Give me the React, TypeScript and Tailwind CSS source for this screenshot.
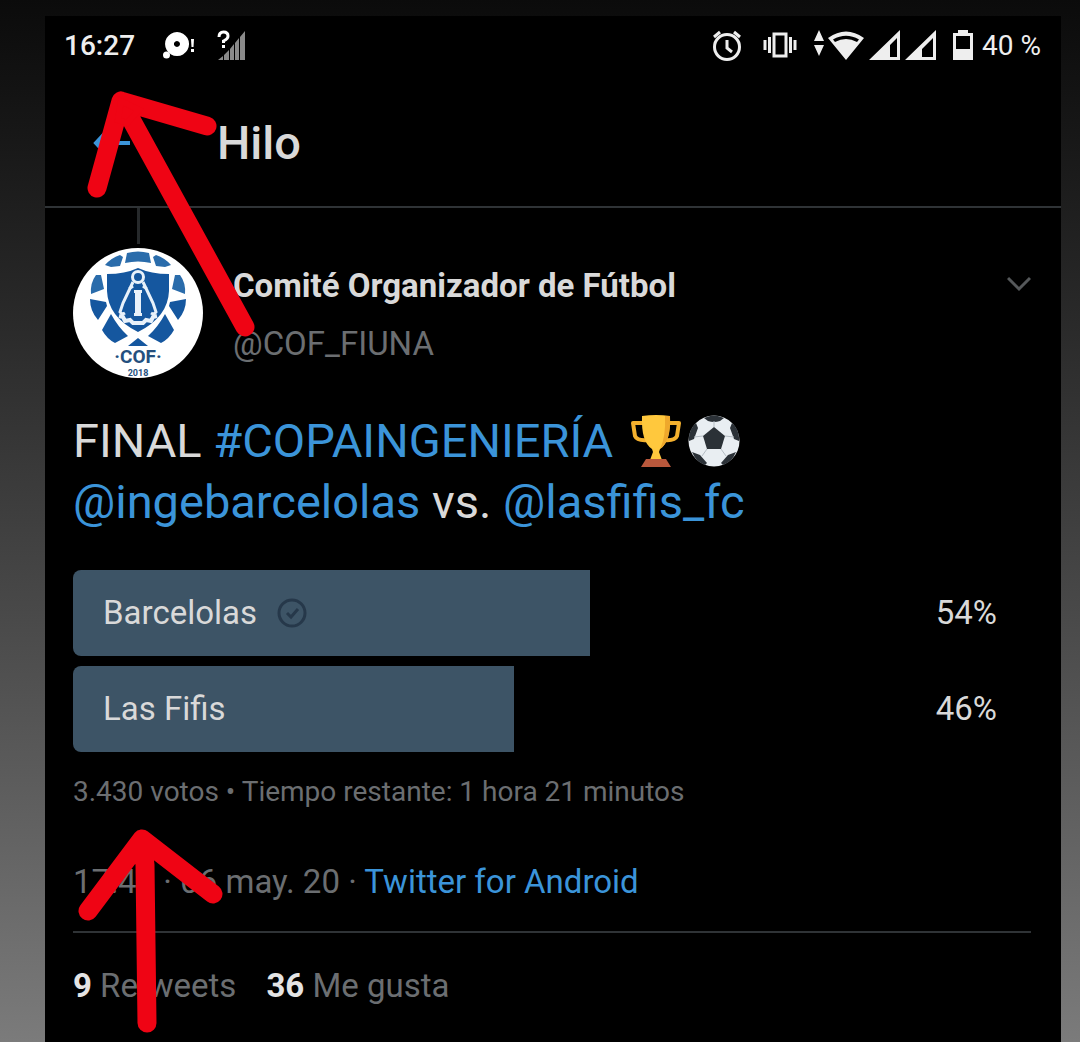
import type { ReactNode } from 'react'

const options = [
  { label: 'Barcelolas', percent: 54, voted: true },
  { label: 'Las Fifis', percent: 46, voted: false },
]

export default function App() {
  return (
    <div className="relative min-h-screen overflow-hidden bg-linear-to-b from-[#0b0b0b] via-[#3f3f3f] to-[#7b7b7b] pt-4 pr-[19px] pl-[45px] font-[Roboto,sans-serif] text-[#d9d9d9]">
      <main className="min-h-[calc(100vh-16px)] bg-black">
        <StatusBar />
        <header className="flex h-[116px] items-center border-b-2 border-[#2f3336] pb-3 pl-12">
          <button type="button" aria-label="Atrás" className="w-[124px]">
            <svg
              viewBox="0 0 38 30"
              className="h-[30px] w-[38px] fill-none stroke-[#3b94d9] stroke-4"
            >
              <path d="M15 2 3 15l12 13M3 15h34" />
            </svg>
          </button>
          <h1 className="text-[47px] leading-[56px] font-medium">Hilo</h1>
        </header>

        <article className="pr-[30px] pl-7">
          <div className="ml-16 h-9 w-[3px] bg-[#26292b]" />
          <div className="flex items-start pt-1">
            <Avatar />
            <div className="ml-[30px] grow pt-[18px]">
              <h2 className="text-[33px] leading-[40px] font-bold">
                Comité Organizador de Fútbol
              </h2>
              <p className="mt-[18px] text-[33px] leading-[40px] text-[#6b6e71]">
                @COF_FIUNA
              </p>
            </div>
            <button type="button" aria-label="Más opciones" className="pt-7">
              <svg
                viewBox="0 0 24 16"
                className="h-4 w-6 fill-none stroke-[#55585a] stroke-3"
              >
                <path d="m1 2 11 11L23 2" />
              </svg>
            </button>
          </div>

          <p className="mt-8 text-[47px] leading-[61px]">
            FINAL <TextLink>#COPAINGENIERÍA</TextLink> <Trophy />
            <Ball />
            <br />
            <TextLink>@ingebarcelolas</TextLink> vs.{' '}
            <TextLink>@lasfifis_fc</TextLink>
          </p>

          <ul className="mt-[38px] flex flex-col gap-[10px] text-[33px]">
            {options.map((option) => (
              <li key={option.label} className="flex h-[86px] items-center">
                <div
                  className="flex h-full items-center gap-5 rounded-l-lg bg-[#3d5466] pl-[30px]"
                  style={{ width: `${option.percent}%` }}
                >
                  {option.label}
                  {option.voted && <VotedMark />}
                </div>
                <span className="ml-auto pr-[34px]">{option.percent}%</span>
              </li>
            ))}
          </ul>

          <p className="mt-5 text-[28px] leading-[40px] text-[#6b6e71]">
            3.430 votos • Tiempo restante: 1 hora 21 minutos
          </p>
          <p className="mt-[50px] border-b-2 border-[#2f3336] pb-[29px] text-[33px] leading-[40px] text-[#6b6e71]">
            17:41 · 06 may. 20 · <TextLink>Twitter for Android</TextLink>
          </p>
          <p className="mt-[33px] flex gap-[30px] text-[33px] leading-[40px] text-[#6b6e71]">
            <span>
              <b className="text-[#e4e4e4]">9</b> Retweets
            </span>
            <span>
              <b className="text-[#e4e4e4]">36</b> Me gusta
            </span>
          </p>
        </article>
      </main>

      <svg
        viewBox="84 88 178 252"
        className="pointer-events-none absolute top-[88px] left-[84px] w-[178px] fill-none stroke-[#ef0414]"
      >
        <path
          d="M97 188 121 101 207 126M121 101 245 327"
          strokeWidth="19"
          strokeLinecap="round"
          strokeLinejoin="round"
        />
        <path d="M121 101l18 9-12 13-9-3z" strokeWidth="6" fill="#ef0414" />
      </svg>
      <svg
        viewBox="74 824 154 214"
        className="pointer-events-none absolute top-[824px] left-[74px] w-[154px] fill-none stroke-[#ef0414]"
      >
        <path
          d="M88 911 142 839 213 894M142 839l3 26 2 158"
          strokeWidth="19"
          strokeLinecap="round"
          strokeLinejoin="round"
        />
      </svg>
    </div>
  )
}

function TextLink({ children }: { children: ReactNode }) {
  return (
    <a href="#" className="text-[#3b94d9]">
      {children}
    </a>
  )
}

function StatusBar() {
  return (
    <div className="flex h-[76px] items-start justify-between pt-[10px] pr-5 pl-[19px] text-[28px] leading-[40px] font-medium text-[#eeeeee]">
      <div className="flex items-center">
        <span>16:27</span>
        <svg viewBox="0 0 34 30" className="ml-7 h-[30px] w-[34px] fill-white">
          <path
            fillRule="evenodd"
            d="M14 1a12 12 0 1 0 .1 0zM14 10a3 3 0 1 1-.1 0z"
          />
          <circle cx="3.500" cy="24" r="3.500" />
          <path d="M28 8h3l-.5 8h-2zM28 18h3v3h-3z" />
        </svg>
        <svg viewBox="0 0 30 32" className="ml-5 h-8 w-[30px]">
          <path
            d="M1 30 6 26v4zM7 30v-5l5-5v10zM13 30V19l4-5v16zM18 30V13l4-5v22zM23 30V7l5-6v29z"
            fill="#8a8a8a"
          />
          <path
            d="M2 7q0-5 4.500-5T11 6q0 3-4.500 5v2M6.500 15v3"
            fill="none"
            stroke="#fff"
            strokeWidth="3"
          />
        </svg>
      </div>
      <div className="flex items-center">
        <svg
          viewBox="0 0 30 32"
          className="h-8 w-[30px] fill-none stroke-[#eeeeee]"
        >
          <circle cx="15" cy="17" r="12.500" strokeWidth="3" />
          <path d="M15 10v8l5 4M2 7l6-5M28 7l-6-5" strokeWidth="3" />
        </svg>
        <svg
          viewBox="0 0 36 28"
          className="ml-5 h-7 w-9 fill-none stroke-[#eeeeee]"
        >
          <path d="M12 2h12v22H12z" strokeWidth="3" />
          <path d="M7.500 5v16M28.500 5v16" strokeWidth="3" />
          <path d="M3 8v10M33 8v10" strokeWidth="3" />
        </svg>
        <svg
          viewBox="0 0 52 32"
          className="ml-[15px] h-8 w-[52px] fill-[#eeeeee]"
        >
          <path d="M6 0l5 11H1zM6 26l5-11H1z" />
          <path
            fillRule="evenodd"
            d="M15 8Q33-5 51 8L33 30zM20 9.500l2 2.500q11-6 22 0l2-2.500Q33 2 20 9.500z"
          />
        </svg>
        <Signal />
        <Signal small />
        <svg viewBox="0 0 20 32" className="mr-[9px] ml-4 h-8 w-5 fill-[#eeeeee]">
          <path
            fillRule="evenodd"
            d="M0 3h5V0h10v3h5v27H0zM3 6v13h14V6z"
          />
        </svg>
        <span className="font-normal">40 %</span>
      </div>
    </div>
  )
}

function Signal({ small = false }: { small?: boolean }) {
  return (
    <svg viewBox="0 0 32 32" className="ml-1 h-8 w-8 fill-[#eeeeee]">
      <path
        fillRule="evenodd"
        d={small ? 'M31 0v30H0zM28 8v19H17v-8z' : 'M31 0v30H0zM28 8v19h-7V15z'}
      />
    </svg>
  )
}

function VotedMark() {
  return (
    <svg
      viewBox="0 0 30 30"
      className="size-[30px] fill-none stroke-[#26384a] stroke-3"
    >
      <circle cx="15" cy="15" r="13" />
      <path d="m10 15 4 4 7-8" />
    </svg>
  )
}

function Avatar() {
  return (
    <svg viewBox="0 0 130 130" className="size-[130px]">
      <circle cx="65" cy="65" r="65" fill="#fff" />
      <g fill="#2a6cab">
        <path d="M54 5q11-3 22 0l2 10q-13-3-26 0zM32 17q6-7 15-10l3 2-3 9-9 1zM98 17q-6-7-15-10l-3 2 3 9 9 1z" />
        <path d="M23 27h5l3 14-13 5q-1-11 5-19zM107 27h-5l-3 14 13 5q1-11-5-19z" />
      </g>
      <g fill="#15579f">
        <path d="M17 51l16 3 1 4-9 14q-8-9-8-21zM113 51l-16 3-1 4 9 14q8-9 8-21z" />
        <path d="M38 66l-9 16q5 9 13 13l13-7q-10-9-17-22zM92 66l9 16q-5 9-13 13l-13-7q10-9 17-22zM65 90l10 8H55z" />
        <path d="M34 26q18 0 31-6 13 6 31 6v17q-1 26-31 41-30-15-31-41z" />
      </g>
      <g fill="none" stroke="#e8f1fa" strokeWidth="3">
        <circle cx="65" cy="29" r="5.500" />
        <path d="M60 34 50 55l-3 9q2 3 5 1M70 34l10 21 3 9q-2 3-5 1M56 41l4-3M74 41l-4-3" />
        <path d="M46 68l4 1 2 4 5-1 3 3h10l3-3 5 1 2-4 4-1" strokeWidth="4" />
      </g>
      <path d="M61 42h8v3h-1v20h1v3h-8v-3h1V45h-1z" fill="#e8f1fa" />
      <g
        fill="#244f7e"
        textAnchor="middle"
        className="font-[Roboto,sans-serif] font-bold"
      >
        <text x="65" y="115" fontSize="19">
          ·COF·
        </text>
        <text x="65" y="128" fontSize="9">
          2018
        </text>
      </g>
    </svg>
  )
}

function Trophy() {
  return (
    <svg
      viewBox="0 0 54 54"
      role="img"
      aria-label="Trofeo"
      className="ml-1 inline-block size-[54px] align-[-11px]"
    >
      <path
        d="M15 9H4l2 13q2 5 13 4M39 9h11l-2 13q-2 5-13 4"
        fill="none"
        stroke="#f5b12e"
        strokeWidth="4"
        strokeLinejoin="round"
      />
      <path
        d="M13 2q14-2 28 0 1 26-10 33l-1 3 3 8H21l3-8-1-3Q12 28 13 2z"
        fill="#ffc83d"
      />
      <path d="M36 2h5q1 26-10 33 6-12 5-33z" fill="#eea82c" />
      <path d="M17 45h20l5 8H12z" fill="#b9583c" />
    </svg>
  )
}

function Ball() {
  return (
    <svg
      viewBox="0 0 54 54"
      role="img"
      aria-label="Balón"
      className="ml-1 inline-block size-[54px] align-[-11px]"
    >
      <circle cx="27" cy="27" r="25.500" fill="#e9eef2" />
      <g fill="#2b3137">
        <path d="M27 13l11 9-4 13H20l-4-13z" />
        <path d="M17 4q10-5 20 0l-4 3q-6 2-12 0zM2 27Q1 16 9 9l2 5-4 11zM52 27q1-11-7-18l-2 5 4 11zM5 38l8 3 7 8-2 2Q9 48 5 38zM49 38l-8 3-7 8 2 2q9-3 13-13z" />
      </g>
      <path
        d="M27 13V7M38 22l9 1M34 35l5 7M20 35l-5 7M16 22l-9 1"
        fill="none"
        stroke="#b5bdc4"
      />
    </svg>
  )
}
